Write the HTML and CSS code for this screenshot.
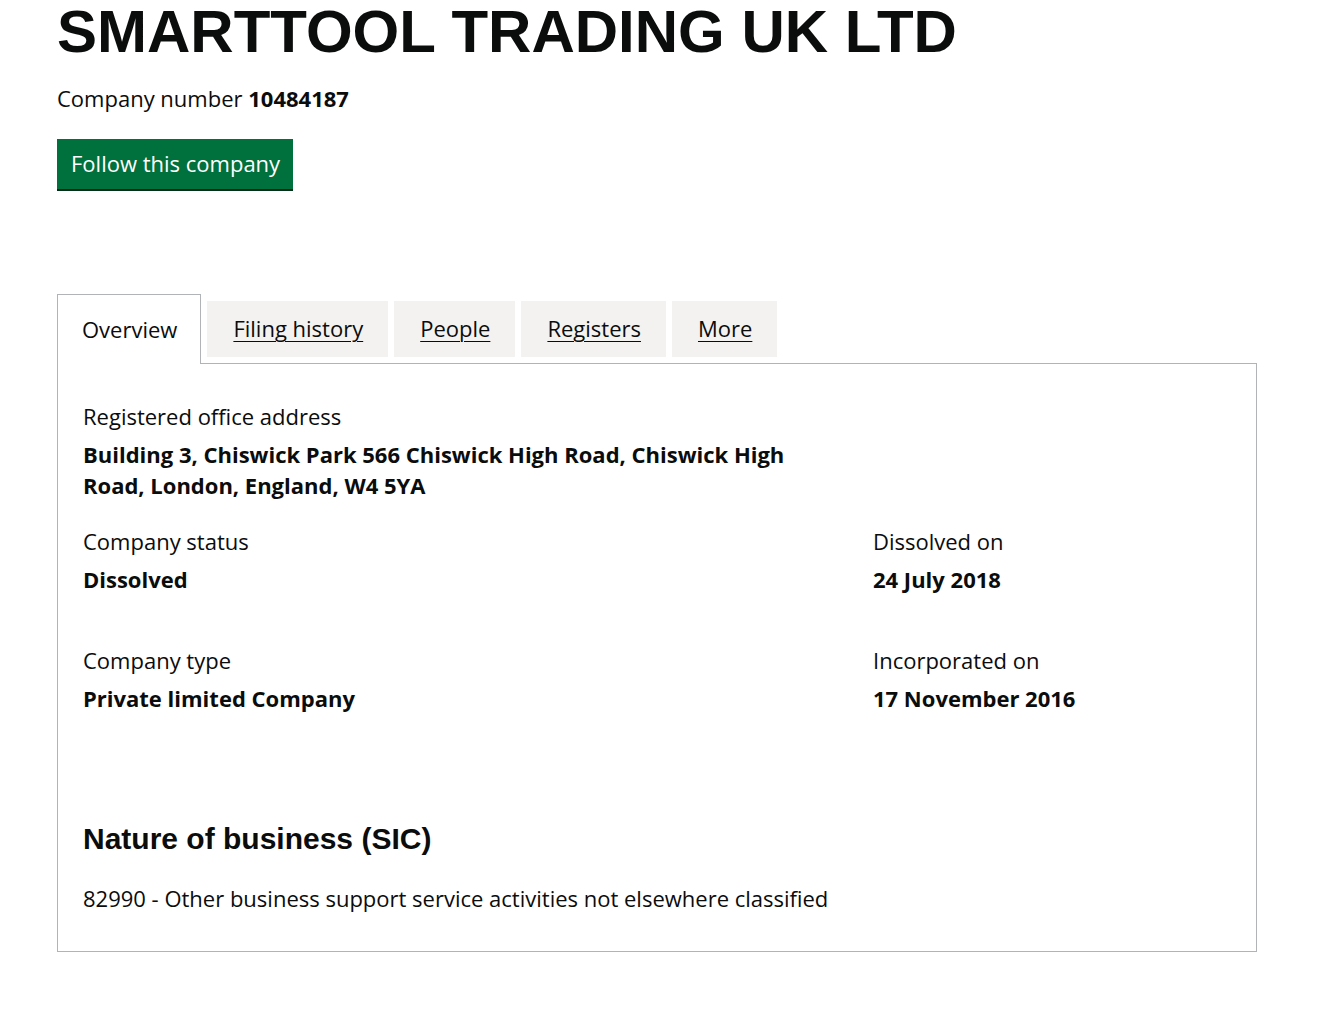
FILE: index.html
```html
<!DOCTYPE html>
<html lang="en">
  <head>
    <meta charset="UTF-8" />
    <title>SMARTTOOL TRADING UK LTD - Overview</title>
    <link rel="stylesheet" href="styles.css">
  </head>
  <body>
    <main class="page">
      <!-- Company header -->
      <h1 class="company-name">SMARTTOOL TRADING UK LTD</h1>
      <p class="company-number">Company number <strong>10484187</strong></p>
      <a class="follow-btn" href="#">Follow this company</a>

      <!-- Tabs -->
      <div class="tabs">
        <ul class="tab-list">
          <li class="tab tab-active"><span>Overview</span></li>
          <li class="tab"><a href="#">Filing history</a></li>
          <li class="tab"><a href="#">People</a></li>
          <li class="tab"><a href="#">Registers</a></li>
          <li class="tab"><a href="#">More</a></li>
        </ul>

        <div class="panel">
          <dl class="address">
            <dt>Registered office address</dt>
            <dd>Building 3, Chiswick Park 566 Chiswick High Road, Chiswick High Road, London, England, W4 5YA</dd>
          </dl>

          <div class="facts">
            <dl>
              <dt>Company status</dt>
              <dd>Dissolved</dd>
            </dl>
            <dl>
              <dt>Dissolved on</dt>
              <dd>24 July 2018</dd>
            </dl>
            <dl>
              <dt>Company type</dt>
              <dd>Private limited Company</dd>
            </dl>
            <dl>
              <dt>Incorporated on</dt>
              <dd>17 November 2016</dd>
            </dl>
          </div>

          <h2 class="sic-heading">Nature of business (SIC)</h2>
          <p class="sic-item">82990 - Other business support service activities not elsewhere classified</p>
        </div>
      </div>
    </main>
  </body>
</html>
```

FILE: styles.css
```css
/* Base */
* {
  box-sizing: border-box;
}

body {
  margin: 0;
  background: #fff;
  color: #0b0c0c;
  font-family: "Open Sans", "Liberation Sans", sans-serif;
}

.page {
  width: 1200px;
  margin-left: 57px;
  padding-bottom: 60px;
}

/* Header */
.company-name {
  margin: 0;
  padding-top: 2px;
  font-family: "Liberation Sans", Arial, sans-serif;
  font-size: 60px;
  font-weight: 700;
  line-height: 60px;
}

.company-number {
  margin: 21px 0 0;
  font-size: 22px;
  line-height: 30px;
}

.company-number strong {
  font-weight: 700;
}

.follow-btn {
  display: inline-block;
  margin-top: 26px;
  padding: 9px 13px 11px 14px;
  background: #00703c;
  box-shadow: 0 2px 0 #002d18;
  color: #fff;
  font-size: 22px;
  line-height: 30px;
  text-decoration: none;
}

/* Tabs */
.tabs {
  margin-top: 105px;
}

.tab-list {
  display: flex;
  align-items: flex-end;
  gap: 6px;
  margin: 0;
  padding: 0;
  list-style: none;
}

.tab {
  height: 56px;
  margin-bottom: 6px;
  padding: 0 25px 0 26px;
  background: #f3f2f1;
  font-size: 22px;
  line-height: 54px;
}

.tab a {
  color: #0b0c0c;
  text-decoration: underline;
  text-decoration-thickness: 1px;
  text-underline-offset: 4px;
}

.tab-active {
  position: relative;
  height: 70px;
  margin-bottom: -1px;
  padding: 0 23px 0 24px;
  background: #fff;
  border: 1px solid #b1b4b6;
  border-bottom: 0;
  line-height: 68px;
}

.panel {
  padding: 37px 25px 38px;
  border: 1px solid #b1b4b6;
}

/* Summary lists */
dl {
  margin: 0;
}

dt {
  font-size: 22px;
  line-height: 30px;
}

dd {
  margin: 8px 0 0;
  font-size: 22px;
  font-weight: 700;
  line-height: 31px;
}

.address {
  max-width: 740px;
}

.facts {
  display: grid;
  grid-template-columns: 790px 1fr;
  row-gap: 50px;
  margin-top: 25px;
}

/* Nature of business */
.sic-heading {
  margin: 105px 0 0;
  font-family: "Liberation Sans", Arial, sans-serif;
  font-size: 30px;
  font-weight: 700;
  line-height: 40px;
}

.sic-item {
  margin: 24px 0 0;
  font-size: 22px;
  line-height: 30px;
}
```
